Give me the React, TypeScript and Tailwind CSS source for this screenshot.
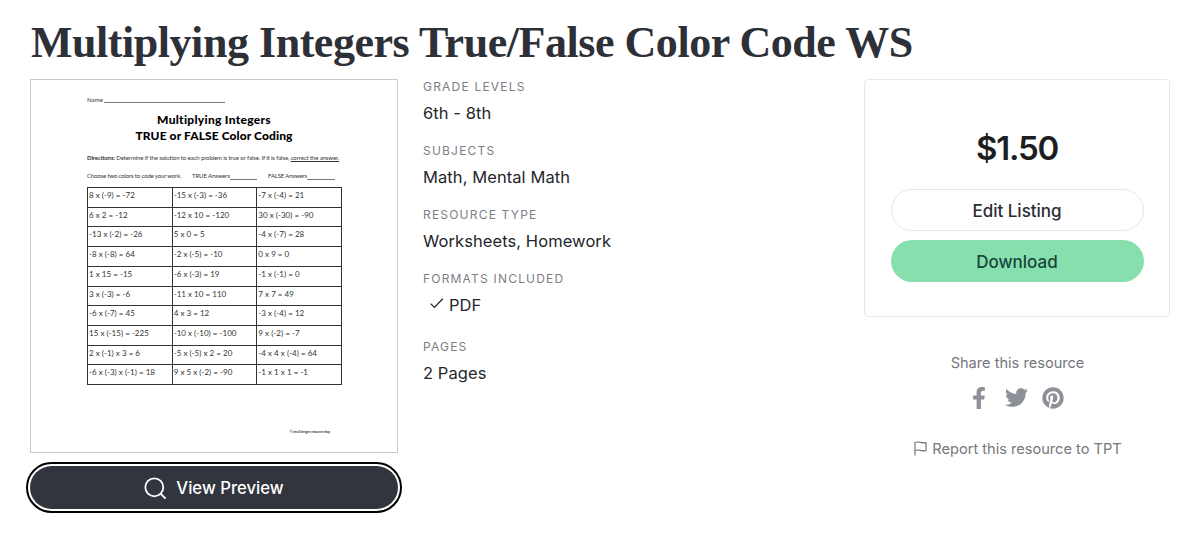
import { FaFacebookF, FaPinterest, FaTwitter } from "react-icons/fa";

const problems = [
  ["8 x (-9) = -72", "-15 x (-3) = -36", "-7 x (-4) = 21"],
  ["6 x 2 = -12", "-12 x 10 = -120", "30 x (-30) = -90"],
  ["-13 x (-2) = -26", "5 x 0 = 5", "-4 x (-7) = 28"],
  ["-8 x (-8) = 64", "-2 x (-5) = -10", "0 x 9 = 0"],
  ["1 x 15 = -15", "-6 x (-3) = 19", "-1 x (-1) = 0"],
  ["3 x (-3) = -6", "-11 x 10 = 110", "7 x 7 = 49"],
  ["-6 x (-7) = 45", "4 x 3 = 12", "-3 x (-4) = 12"],
  ["15 x (-15) = -225", "-10 x (-10) = -100", "9 x (-2) = -7"],
  ["2 x (-1) x 3 = 6", "-5 x (-5) x 2 = 20", "-4 x 4 x (-4) = 64"],
  ["-6 x (-3) x (-1) = 18", "9 x 5 x (-2) = -90", "-1 x 1 x 1 = -1"],
];

function Worksheet() {
  return (
    <div className="w-[368px] h-[374px] border border-[#c9cacc] pl-14 pt-[15px] font-['Lato',sans-serif] text-[#333]">
      <div className="w-[254px] whitespace-nowrap">
        <div className="flex items-end h-[9px] text-[6px] leading-[8px]">
          <span className="w-[17px] tracking-[0.1px]">Name</span>
          <span className="w-[121px] mb-[1px] border-b border-[#777]"></span>
        </div>
        <div className="mt-[8px] text-center text-[12px] leading-[15.5px] font-black text-black">
          <div className="tracking-[0.3px]">Multiplying Integers</div>
          <div className="tracking-[0.1px]">TRUE or FALSE Color Coding</div>
        </div>
        <div className="mt-[10px] text-[6px] leading-[10px] tracking-[-0.11px]">
          <span className="font-bold">Directions:</span> Determine if the solution to each problem is true or false. If it is false,{" "}
          <span className="underline">correct the answer.</span>
        </div>
        <div className="mt-[8px] flex items-end text-[6px] leading-[10px]">
          <span className="w-[105px] tracking-[-0.15px]">Choose two colors to code your work.</span>
          <span className="w-[38px] tracking-[-0.1px]">TRUE Answers</span>
          <span className="w-[27px] mb-[1px] border-b border-[#777]"></span>
          <span className="w-[39px] ml-[11px] tracking-[-0.15px]">FALSE Answers</span>
          <span className="w-[28px] mb-[1px] border-b border-[#777]"></span>
        </div>
        <div className="mt-[6px] w-[255px] h-[198px] grid grid-cols-3 grid-rows-10 border-t border-l border-[#333] text-[8px] leading-[15px]">
          {problems.flat().map((p) => (
            <div key={p} className="border-r border-b border-[#333] pl-[1px] tracking-[0.02px] overflow-hidden">
              {p}
            </div>
          ))}
        </div>
        <div className="mt-[45px] mr-[11px] text-right text-[3px] leading-[5px] font-bold">
          © small designs resource shop
        </div>
      </div>
    </div>
  );
}

function Field({ label, children }: { label: string; children: React.ReactNode }) {
  return (
    <div>
      <div className="text-[12px] leading-4 tracking-[1.2px] text-[#7c7e85]">{label}</div>
      <div className="mt-[6px] h-[26px] text-[16.5px] leading-6 tracking-[0.08px] text-[#24262a]">{children}</div>
    </div>
  );
}

export default function App() {
  return (
    <div className="w-[1200px] h-[545px] bg-white overflow-hidden px-[30px] pt-[18px] font-['Inter',sans-serif]">
      <h1 className="h-[61px] pl-px whitespace-nowrap font-['Liberation_Serif',serif] font-bold text-[44px] leading-[50px] tracking-[-0.46px] text-[#2e3037]">
        Multiplying Integers True/False Color Code WS
      </h1>
      <div className="flex items-start">
        <div className="w-[368px]">
          <Worksheet />
          <button className="mt-[13px] w-full h-[43px] flex items-center justify-center rounded-full bg-[#32353d] text-white text-[16.7px] font-medium ring-2 ring-white outline-2 outline-offset-2 outline-black">
            <svg width="22" height="22" viewBox="0 0 22 22" fill="none" stroke="currentColor" strokeWidth="1.8" strokeLinecap="round" className="mr-[10px]">
              <circle cx="10.3" cy="10.3" r="9" />
              <path d="M16.8 16.8 L21 21" />
            </svg>
            <span className="pt-[2px]">View Preview</span>
          </button>
        </div>

        <div className="ml-[25px] w-[441px] flex flex-col gap-4">
          <Field label="GRADE LEVELS">6th - 8th</Field>
          <Field label="SUBJECTS">Math, Mental Math</Field>
          <Field label="RESOURCE TYPE">Worksheets, Homework</Field>
          <Field label="FORMATS INCLUDED">
            <span className="flex items-center pl-[7px]">
              <svg width="14" height="11" viewBox="0 0 14 11" fill="none" stroke="currentColor" strokeWidth="1.3" className="mr-[5px] -mt-[4px]">
                <path d="M0.6 5.6 L4.4 9.4 L12.8 0.8" />
              </svg>
              PDF
            </span>
          </Field>
          <div className="pt-1">
            <Field label="PAGES">2 Pages</Field>
          </div>
        </div>

        <div className="w-[307px] flex flex-col items-center">
          <div className="w-[306px] ml-px h-[238px] border border-[#e8e9ea] rounded px-[25.5px] pt-[48px]">
            <div className="h-[61px] text-center text-[33px] leading-10 font-semibold tracking-[-1.2px] text-[#1d1e20]">$1.50</div>
            <button className="w-full h-[42px] block border border-[#e5e6e8] rounded-full pt-[3px] text-[17px] font-medium text-[#2b2d33]">
              Edit Listing
            </button>
            <button className="mt-[9px] w-full h-[42px] block rounded-full bg-[#87dfad] pt-[3px] text-[17px] font-medium text-[#17473a]">
              Download
            </button>
          </div>
          <div className="mt-9 ml-[2px] text-[14.6px] leading-5 text-[#75777d]">Share this resource</div>
          <div className="mt-[13px] ml-[3px] flex items-center text-[#8e9097]">
            <FaFacebookF className="w-[14px] h-[22px]" />
            <FaTwitter className="w-[23px] h-[23px] ml-[19px]" />
            <FaPinterest className="w-[22px] h-[22px] ml-[14px]" />
          </div>
          <div className="mt-[30px] ml-[3px] flex items-center text-[14.6px] leading-5 text-[#75777d]">
            <svg width="13" height="15" viewBox="0 0 13 15" fill="none" stroke="currentColor" strokeWidth="1.2" className="mr-[5px] -mt-px">
              <path d="M1 14.5 V1.6 C3 0.7 4.7 0.9 6.5 1.4 C8.4 2 10 2.1 12 1.6 V9.6 C10 10.1 8.4 10 6.5 9.4 C4.7 8.9 3 8.7 1 9.6" />
            </svg>
            Report this resource to TPT
          </div>
        </div>
      </div>
    </div>
  );
}
